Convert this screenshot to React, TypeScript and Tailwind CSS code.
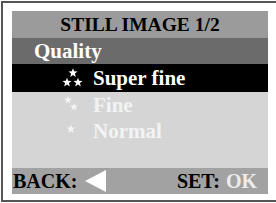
import React from 'react';

const Star = ({ x, y, r }: { x: number; y: number; r: number }) => {
  const pts: string[] = [];
  for (let i = 0; i < 10; i++) {
    const a = -Math.PI / 2 + (i * Math.PI) / 5;
    const rr = i % 2 === 0 ? r : r * 0.42;
    pts.push(`${(x + rr * Math.cos(a)).toFixed(2)},${(y + rr * Math.sin(a)).toFixed(2)}`);
  }
  return <polygon points={pts.join(' ')} fill="currentColor" />;
};

const ThreeStars = () => (
  <svg width="22" height="20" viewBox="0 0 22 20" className="text-white">
    <Star x={11} y={5} r={4.8} />
    <Star x={5} y={14.5} r={4.8} />
    <Star x={16} y={14.5} r={4.8} />
  </svg>
);

const TwoStars = () => (
  <svg width="22" height="20" viewBox="0 0 22 20" className="text-[#f4f4f4]">
    <Star x={6} y={5} r={4.2} />
    <Star x={12} y={12} r={4.2} />
  </svg>
);

const OneStar = () => (
  <svg width="22" height="20" viewBox="0 0 22 20" className="text-[#f4f4f4]">
    <Star x={9} y={8} r={4.6} />
  </svg>
);

const rows = [
  { label: 'Super fine', icon: <ThreeStars />, active: true },
  { label: 'Fine', icon: <TwoStars />, active: false },
  { label: 'Normal', icon: <OneStar />, active: false },
];

export default function App() {
  return (
    <div className="w-[276px] h-[203px] bg-white pt-px pl-px font-['Liberation_Serif',serif]">
      <div className="h-[201px] border-t-2 border-l-2 border-b-2 border-[#555555] pl-[9px] pt-[8px]">
        <div className="w-[256px] h-[183px] flex flex-col font-bold">
          <div className="h-[27px] bg-[#9b9b9b] flex items-center justify-center text-black text-[19.5px] leading-none pt-px">
            STILL IMAGE 1/2
          </div>
          <div className="h-[26px] bg-[#6b6b6b] flex items-center pl-[22px] text-white text-[21px] leading-none pt-px">
            Quality
          </div>
          <div className="flex-1 bg-[#d5d5d5] flex flex-col">
            {rows.map((r) => (
              <div
                key={r.label}
                className={`flex items-center pl-[50px] text-[21px] leading-none ${r.active ? 'bg-black text-white h-[28px]' : 'text-[#f3f3f3] h-[26px]'}`}
              >
                <span className="w-[31px] flex items-center">{r.icon}</span>
                <span>{r.label}</span>
              </div>
            ))}
          </div>
          <div className="h-[26px] bg-[#a2a2a2] flex items-center justify-between pl-px pr-[11px] text-[20px] leading-none">
            <div className="flex items-center gap-[8px] text-black">
              <span>BACK:</span>
              <svg width="21" height="22" viewBox="0 0 21 22">
                <polygon points="0,11 21,0 21,22" fill="#ffffff" />
              </svg>
            </div>
            <div className="flex items-center gap-[6px]">
              <span className="text-black">SET:</span>
              <span className="text-[#ececec]">OK</span>
            </div>
          </div>
        </div>
      </div>
    </div>
  );
}
